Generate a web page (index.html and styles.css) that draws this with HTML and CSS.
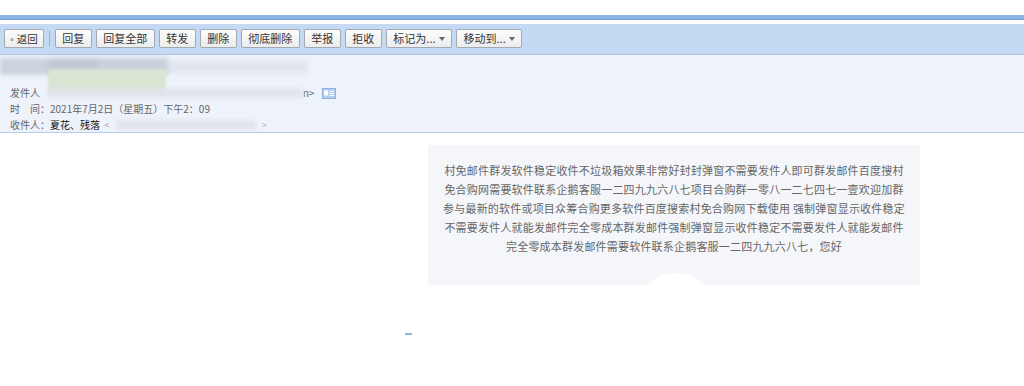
FILE: index.html
```html
<!DOCTYPE html>
<html lang="zh-CN">
<head>
  <meta charset="UTF-8">
  <title>读信</title>
  <link rel="stylesheet" href="styles.css">
</head>
<body>
  <!-- 顶部蓝条 -->
  <div class="topbar"></div>

  <!-- 工具栏 -->
  <div class="toolbar">
    <button class="btn btn-back"><span class="laquo">&laquo;</span>返回</button>
    <span class="sep"></span>
    <button class="btn">回复</button>
    <button class="btn">回复全部</button>
    <button class="btn">转发</button>
    <button class="btn">删除</button>
    <button class="btn">彻底删除</button>
    <button class="btn">举报</button>
    <button class="btn">拒收</button>
    <button class="btn btn-menu">标记为... <span class="arrow"></span></button>
    <button class="btn btn-menu">移动到... <span class="arrow"></span></button>
  </div>

  <!-- 信头 -->
  <div class="mail-head">
    <div class="subject">
      <span class="mosaic m1"></span><span class="mosaic m2"></span><span class="mosaic m3"></span><span class="mosaic m4"></span>
    </div>
    <span class="mosaic-green"></span>
    <div class="row">
      <span class="label">发件人</span>
      <span class="smudge from-addr"></span>
      <span class="label">n&gt;</span>
      <svg class="vcard" width="14" height="11" viewBox="0 0 14 11">
        <rect x="0.5" y="0.5" width="13" height="10" fill="#b3cdee" stroke="#8fb2e0"/>
        <rect x="2" y="2.5" width="4" height="5" fill="#fff"/>
        <rect x="7.5" y="3" width="4.5" height="1" fill="#fff"/>
        <rect x="7.5" y="5" width="4.5" height="1" fill="#fff"/>
        <rect x="7.5" y="7" width="4.5" height="1" fill="#fff"/>
      </svg>
    </div>
    <div class="row">
      <span class="label">时　间：2021年7月2日（星期五）下午2：09</span>
    </div>
    <div class="row">
      <span class="label">收件人：</span><span class="name">夏花、残落</span>
      <span class="label lt">&lt;</span>
      <span class="smudge to-addr"></span>
      <span class="label faint">&gt;</span>
    </div>
  </div>

  <!-- 正文 -->
  <div class="mail-body">
    <div class="notice">
      <p>
        村免邮件群发软件稳定收件不垃圾箱效果非常好封封弹窗不需要发件人即可群发邮件百度搜村<br>
        免合购网需要软件联系企鹅客服一二四九九六八七项目合购群一零八一二七四七一壹欢迎加群<br>
        参与最新的软件或项目众筹合购更多软件百度搜索村免合购网下载使用 强制弹窗显示收件稳定<br>
        不需要发件人就能发邮件完全零成本群发邮件强制弹窗显示收件稳定不需要发件人就能发邮件<br>
        完全零成本群发邮件需要软件联系企鹅客服一二四九九六八七，您好
      </p>
      <span class="blob"></span>
    </div>
    <div class="dash"></div>
  </div>
</body>
</html>
```

FILE: styles.css
```css
/* 全局 */
body {
  margin: 0;
  padding: 0;
  background: #fff;
  font-family: "Liberation Sans", "Noto Sans CJK SC", sans-serif;
  font-size: 11px;
  color: #333;
}

/* 顶部蓝条 */
.topbar {
  margin-top: 15px;
  height: 4px;
  background: #8db5e7;
  border-bottom: 1px solid #6f9bd2;
  margin-bottom: 4px;
}

/* 工具栏 */
.toolbar {
  height: 25px;
  padding: 5px 0 0 4px;
  background: #c4d9f2;
  border-bottom: 1px solid #a9c3e3;
  display: flex;
  align-items: flex-start;
  gap: 4px;
}
.btn {
  height: 19px;
  padding: 0 6.5px;
  border: 1px solid #a3a9b2;
  border-radius: 2px;
  background: linear-gradient(#fdfdfd, #ececec);
  font-family: "Noto Sans CJK SC", sans-serif;
  font-size: 11px;
  line-height: 17px;
  color: #333;
  display: flex;
  align-items: center;
  gap: 3px;
}
.btn-back {
  padding: 0 5px;
  gap: 3px;
  font-size: 10.5px;
}
.laquo {
  font-size: 8px;
  color: #555;
}
.sep {
  width: 1px;
  height: 15px;
  margin: 2px 1px 0 1px;
  background: #98b3d3;
}
.arrow {
  width: 0;
  height: 0;
  border-left: 3px solid transparent;
  border-right: 3px solid transparent;
  border-top: 4px solid #666;
}

/* 信头 */
.mail-head {
  position: relative;
  height: 77px;
  background: #eef3fb;
  border-bottom: 1px solid #b8cde9;
  padding-left: 10px;
  color: #666;
  font-family: "Noto Sans CJK SC", sans-serif;
  font-size: 10px;
}
.subject {
  height: 27px;
  display: flex;
  align-items: flex-start;
  padding-top: 3px;
  margin-left: -10px;
  filter: blur(2px);
}
.mosaic {
  height: 17px;
  background: #c9d0da;
}
.m1 { width: 48px; background: #cdd3dd; }
.m2 { width: 50px; background: #c2c9d3; }
.m3 { width: 70px; background: #cbd1db; }
.m4 { width: 140px; height: 12px; background: #e1e6ee; margin-top: 3px; }
.mosaic-green {
  position: absolute;
  left: 48px;
  top: 14px;
  width: 118px;
  height: 26px;
  background: #d9e4d2;
  filter: blur(1px);
}
.row {
  height: 16px;
  line-height: 16px;
  display: flex;
  align-items: center;
}
.label {
  white-space: nowrap;
}
.name {
  color: #111;
}
.lt {
  margin-left: 4px;
  color: #aaa;
}
.faint {
  color: #bbb;
}
.smudge {
  display: inline-block;
  height: 10px;
  background: #e0e5ec;
  filter: blur(2px);
}
.from-addr {
  width: 255px;
  margin-left: 8px;
}
.to-addr {
  width: 140px;
  margin: 0 6px;
}
.vcard {
  margin-left: 7px;
}

/* 正文 */
.mail-body {
  padding: 12px 0 0 428px;
}
.notice {
  position: relative;
  width: 492px;
  height: 140px;
  background: #f5f6fa;
  overflow: hidden;
}
.notice p {
  margin: 0;
  padding-top: 16px;
  text-align: center;
  font-family: "Noto Sans CJK SC", sans-serif;
  font-size: 11px;
  letter-spacing: 0.2px;
  line-height: 19px;
  color: #666;
  white-space: nowrap;
}
.blob {
  position: absolute;
  left: 218px;
  top: 128px;
  width: 60px;
  height: 40px;
  border-radius: 50%;
  background: #fff;
}
.dash {
  width: 7px;
  height: 2px;
  margin: 48px 0 0 -23px;
  background: #8fb4e0;
}
```
